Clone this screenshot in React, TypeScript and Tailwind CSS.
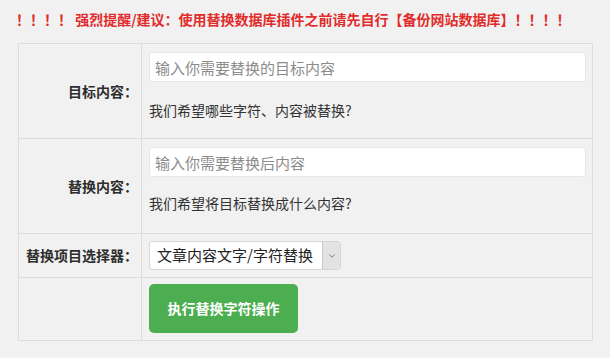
import { ChevronDown } from "lucide-react";

const font = {
  fontFamily: '"Noto Sans CJK SC", "Noto Sans", "Liberation Sans", sans-serif',
};

function Label({ text }: { text: string }) {
  return (
    <th className="w-[123px] border border-[#dcdcdc] pr-[3px] text-right align-middle text-[14px] font-bold whitespace-nowrap text-[#2d2d2d]">
      {text}
    </th>
  );
}

export default function App() {
  return (
    <div className="h-[358px] w-[610px] overflow-hidden bg-[#f1f1f1]" style={font}>
      <p className="pl-[16px] pt-[8px] text-[14px] font-bold leading-[22px] text-[#e22b2b]">
        ！！！！ 强烈提醒/建议：使用替换数据库插件之前请先自行【备份网站数据库】！！！！
      </p>

      <table className="ml-[18px] mt-[13px] w-[575px] table-fixed border-collapse border border-[#dcdcdc]">
        <colgroup>
          <col className="w-[123px]" />
          <col />
        </colgroup>
        <tbody>
          <tr>
            <Label text="目标内容：" />
            <td className="border border-[#dcdcdc] pb-[18px] pl-[7px] pr-[6px] pt-[8px]">
              <input
                className="h-[30px] w-full rounded-[3px] border border-[#e6e6e6] bg-white px-[5px] text-[15px] text-[#333] outline-none placeholder:text-[#8c8c8c]"
                placeholder="输入你需要替换的目标内容"
              />
              <p className="mt-[18px] text-[14px] leading-[20px] text-[#333]">我们希望哪些字符、内容被替换?</p>
            </td>
          </tr>
          <tr>
            <Label text="替换内容：" />
            <td className="border border-[#dcdcdc] pb-[20px] pl-[7px] pr-[6px] pt-[8px]">
              <input
                className="h-[30px] w-full rounded-[3px] border border-[#e6e6e6] bg-white px-[5px] text-[15px] text-[#333] outline-none placeholder:text-[#8c8c8c]"
                placeholder="输入你需要替换后内容"
              />
              <p className="mt-[16px] text-[14px] leading-[20px] text-[#333]">我们希望将目标替换成什么内容?</p>
            </td>
          </tr>
          <tr>
            <Label text="替换项目选择器：" />
            <td className="border border-[#dcdcdc] pb-[7px] pl-[7px] pt-[7px]">
              <div className="flex h-[29px] w-[192px] overflow-hidden rounded-[3px] border border-[#d6d6d6] bg-white">
                <span className="flex flex-1 items-center pl-[7px] text-[15px] text-[#222]">文章内容文字/字符替换</span>
                <span className="flex w-[18px] items-center justify-center border-l border-[#c8c8c8] bg-[#e3e3e3]">
                  <ChevronDown className="h-[10px] w-[10px] text-[#666]" strokeWidth={2} />
                </span>
              </div>
            </td>
          </tr>
          <tr>
            <td className="border border-[#dcdcdc]"></td>
            <td className="border border-[#dcdcdc] pb-[7px] pl-[7px] pt-[6px]">
              <button className="h-[49px] w-[149px] rounded-[5px] bg-[#4cae50] text-[14px] font-bold text-white">
                执行替换字符操作
              </button>
            </td>
          </tr>
        </tbody>
      </table>
    </div>
  );
}
